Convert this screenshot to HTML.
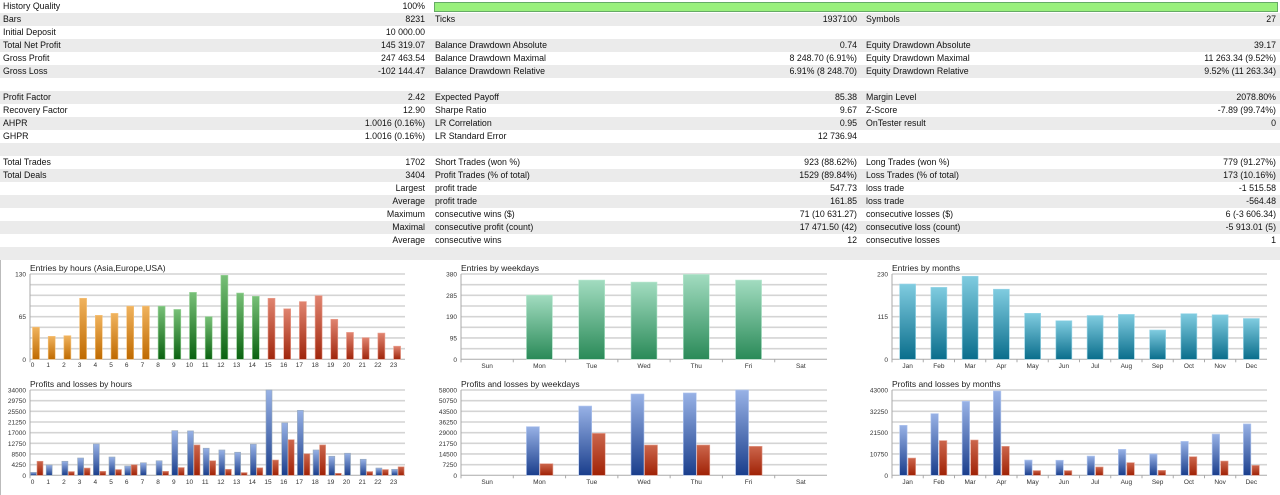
<!DOCTYPE html>
<html><head><meta charset="utf-8"><style>
html,body{margin:0;padding:0;background:#fff;width:1280px;height:495px;overflow:hidden;font-family:"Liberation Sans",sans-serif;}
#tbl{position:absolute;left:0;top:0;width:1280px;}
.r{position:relative;height:13px;font-size:8.8px;line-height:13px;color:#111;}
.r:nth-child(even){background:#ebebeb;}
.r span{position:absolute;white-space:nowrap;}
.a{left:3px}.b{right:855px}.c{left:435px}.d{right:423px}.e{left:866px}.f{right:4px}
#bar{position:absolute;left:434px;top:2px;width:842px;height:8px;background:#99f07c;border:1px solid #6a6;}
svg{position:absolute;left:0;top:260px}
</style></head><body>
<div id="tbl">
<div class="r"><span class="a">History Quality</span><span class="b">100%</span></div>
<div class="r"><span class="a">Bars</span><span class="b">8231</span><span class="c">Ticks</span><span class="d">1937100</span><span class="e">Symbols</span><span class="f">27</span></div>
<div class="r"><span class="a">Initial Deposit</span><span class="b">10 000.00</span></div>
<div class="r"><span class="a">Total Net Profit</span><span class="b">145 319.07</span><span class="c">Balance Drawdown Absolute</span><span class="d">0.74</span><span class="e">Equity Drawdown Absolute</span><span class="f">39.17</span></div>
<div class="r"><span class="a">Gross Profit</span><span class="b">247 463.54</span><span class="c">Balance Drawdown Maximal</span><span class="d">8 248.70 (6.91%)</span><span class="e">Equity Drawdown Maximal</span><span class="f">11 263.34 (9.52%)</span></div>
<div class="r"><span class="a">Gross Loss</span><span class="b">-102 144.47</span><span class="c">Balance Drawdown Relative</span><span class="d">6.91% (8 248.70)</span><span class="e">Equity Drawdown Relative</span><span class="f">9.52% (11 263.34)</span></div>
<div class="r"></div>
<div class="r"><span class="a">Profit Factor</span><span class="b">2.42</span><span class="c">Expected Payoff</span><span class="d">85.38</span><span class="e">Margin Level</span><span class="f">2078.80%</span></div>
<div class="r"><span class="a">Recovery Factor</span><span class="b">12.90</span><span class="c">Sharpe Ratio</span><span class="d">9.67</span><span class="e">Z-Score</span><span class="f">-7.89 (99.74%)</span></div>
<div class="r"><span class="a">AHPR</span><span class="b">1.0016 (0.16%)</span><span class="c">LR Correlation</span><span class="d">0.95</span><span class="e">OnTester result</span><span class="f">0</span></div>
<div class="r"><span class="a">GHPR</span><span class="b">1.0016 (0.16%)</span><span class="c">LR Standard Error</span><span class="d">12 736.94</span></div>
<div class="r"></div>
<div class="r"><span class="a">Total Trades</span><span class="b">1702</span><span class="c">Short Trades (won %)</span><span class="d">923 (88.62%)</span><span class="e">Long Trades (won %)</span><span class="f">779 (91.27%)</span></div>
<div class="r"><span class="a">Total Deals</span><span class="b">3404</span><span class="c">Profit Trades (% of total)</span><span class="d">1529 (89.84%)</span><span class="e">Loss Trades (% of total)</span><span class="f">173 (10.16%)</span></div>
<div class="r"><span class="b">Largest</span><span class="c">profit trade</span><span class="d">547.73</span><span class="e">loss trade</span><span class="f">-1 515.58</span></div>
<div class="r"><span class="b">Average</span><span class="c">profit trade</span><span class="d">161.85</span><span class="e">loss trade</span><span class="f">-564.48</span></div>
<div class="r"><span class="b">Maximum</span><span class="c">consecutive wins ($)</span><span class="d">71 (10 631.27)</span><span class="e">consecutive losses ($)</span><span class="f">6 (-3 606.34)</span></div>
<div class="r"><span class="b">Maximal</span><span class="c">consecutive profit (count)</span><span class="d">17 471.50 (42)</span><span class="e">consecutive loss (count)</span><span class="f">-5 913.01 (5)</span></div>
<div class="r"><span class="b">Average</span><span class="c">consecutive wins</span><span class="d">12</span><span class="e">consecutive losses</span><span class="f">1</span></div>
<div class="r"></div>
</div>
<div id="bar"></div>
<svg id="ch" width="1280" height="235" viewBox="0 260 1280 235" font-family="Liberation Sans, sans-serif">
<defs>
<linearGradient id="go" x1="0" y1="0" x2="0" y2="1"><stop offset="0" stop-color="#f0b35e"/><stop offset="1" stop-color="#bf6a00"/></linearGradient>
<linearGradient id="gg" x1="0" y1="0" x2="0" y2="1"><stop offset="0" stop-color="#78c078"/><stop offset="1" stop-color="#0a6210"/></linearGradient>
<linearGradient id="gr" x1="0" y1="0" x2="0" y2="1"><stop offset="0" stop-color="#e08470"/><stop offset="1" stop-color="#a0260c"/></linearGradient>
<linearGradient id="gb" x1="0" y1="0" x2="0" y2="1"><stop offset="0" stop-color="#98b2e6"/><stop offset="1" stop-color="#1a3e8c"/></linearGradient>
<linearGradient id="gd" x1="0" y1="0" x2="0" y2="1"><stop offset="0" stop-color="#cc664c"/><stop offset="1" stop-color="#a02206"/></linearGradient>
<linearGradient id="gw" x1="0" y1="0" x2="0" y2="1"><stop offset="0" stop-color="#a2dcc0"/><stop offset="1" stop-color="#2a8a58"/></linearGradient>
<linearGradient id="gt" x1="0" y1="0" x2="0" y2="1"><stop offset="0" stop-color="#80cce0"/><stop offset="1" stop-color="#0a6e8c"/></linearGradient>
</defs>
<line x1="0.5" y1="260" x2="0.5" y2="495" stroke="#bbb"/>
<g id="g"></g>
</svg>
<script>
var S='http://www.w3.org/2000/svg',G=document.getElementById('g');
function el(t,a,tx){var e=document.createElementNS(S,t);for(var k in a)e.setAttribute(k,a[k]);if(tx!=null)e.textContent=tx;G.appendChild(e);return e;}
function axes(x0,x1,top,zero,title,labels,every){
  el('text',{x:x0,y:top-3,'font-size':'8.5',fill:'#222'},title);
  for(var i=0;i<=8;i++){var y=top+(zero-top)*i/8;el('line',{x1:x0,x2:x1,y1:y,y2:y,stroke:i==8?'#aaa':'#d4d4d4','stroke-width':i==8?1:1.6});}
  el('line',{x1:x0,x2:x0,y1:top,y2:zero+3,stroke:'#aaa'});
  for(var j=0;j<labels.length;j++){var y=top+(zero-top)*j*every/8;el('text',{x:x0-4,y:y+2.5,'font-size':'6.5','text-anchor':'end',fill:'#333'},labels[j]);}
}
function xl(xs,y,names){for(var i=0;i<names.length;i++)el('text',{x:xs[i],y:y,'font-size':'6.5','text-anchor':'middle',fill:'#333'},names[i]);}
function bar(x,w,v,max,top,zero,f,st){var h=(zero-top)*v/max;if(h<=0)return;el('rect',{x:x,y:zero-h,width:w,height:h,fill:'url(#'+f+')',stroke:st,'stroke-width':0.6});}
var t1=274,z1=359.3,t2=390,z2=475.3;
axes(30,405,t1,z1,'Entries by hours (Asia,Europe,USA)',['130','65','0'],4);
axes(30,405,t2,z2,'Profits and losses by hours',['34000','29750','25500','21250','17000','12750','8500','4250','0'],1);
var eh=[49,35,36,93,67,70,81,81,81,76,102,65,128,101,96,93,77,88,97,61,41,33,40,20];
var pb=[1200,4100,5600,6900,12500,7300,3700,5000,5800,17800,17700,10800,10100,9200,12400,34000,20900,25900,10100,7600,8800,6400,2900,2400];
var pr=[5600,0,1500,2900,1600,2300,4200,0,1600,3100,12100,5800,2400,1100,3000,6100,14200,8600,12100,800,0,1500,2300,3400];
var hx=[],hn=[];
for(var i=0;i<24;i++){var x=32.5+i*15.7;hx.push(x);hn.push(''+i);
 var f=i<8?'go':(i<15?'gg':'gr');bar(x,7,eh[i],130,t1,z1,f,i<8?'#f6c27a':(i<15?'#9ad49a':'#eca090'));
 bar(x-2,6,pb[i],34000,t2,z2,'gb','#9ab');bar(x+4.5,6,pr[i],34000,t2,z2,'gd','#e09a88');}
xl(hx,367,hn);xl(hx,484,hn);
var wx0=461,wx1=827,cw=(wx1-wx0)/7;
axes(wx0,wx1,t1,z1,'Entries by weekdays',['380','285','190','95','0'],2);
axes(wx0,wx1,t2,z2,'Profits and losses by weekdays',['58000','50750','43500','36250','29000','21750','14500','7250','0'],1);
var wn=['Sun','Mon','Tue','Wed','Thu','Fri','Sat'],we=[0,286,353,344,378,353,0],wb=[0,33100,47100,55300,56000,58000,0],wr=[0,7900,28500,20600,20600,19700,0],wxs=[];
for(var i=0;i<7;i++){var c=wx0+cw*(i+0.5);wxs.push(c);
 el('line',{x1:wx0+cw*i,x2:wx0+cw*i,y1:z1,y2:z1+3,stroke:'#aaa'});el('line',{x1:wx0+cw*i,x2:wx0+cw*i,y1:z2,y2:z2+3,stroke:'#aaa'});
 bar(c-13,26,we[i],380,t1,z1,'gw','#b8e8cf');bar(c-13,13,wb[i],58000,t2,z2,'gb','#b4c8f0');bar(c+0.5,13,wr[i],58000,t2,z2,'gd','#e4a090');}
xl(wxs,368,wn);xl(wxs,484,wn);
var mx0=892,mx1=1267,mw=(mx1-mx0)/12;
axes(mx0,mx1,t1,z1,'Entries by months',['230','115','0'],4);
axes(mx0,mx1,t2,z2,'Profits and losses by months',['43000','32250','21500','10750','0'],2);
var mn=['Jan','Feb','Mar','Apr','May','Jun','Jul','Aug','Sep','Oct','Nov','Dec'];
var me=[203,194,224,189,124,104,118,121,79,123,120,110];
var mb=[25200,31100,37300,42500,7700,7600,9700,13100,10800,17100,20800,25900];
var mr=[8700,17500,17800,14600,2400,2400,4200,6400,2500,9400,7200,5000],mxs=[];
for(var i=0;i<12;i++){var c=mx0+mw*(i+0.5);mxs.push(c);
 el('line',{x1:mx0+mw*i,x2:mx0+mw*i,y1:z1,y2:z1+3,stroke:'#aaa'});el('line',{x1:mx0+mw*i,x2:mx0+mw*i,y1:z2,y2:z2+3,stroke:'#aaa'});
 bar(c-8,16,me[i],230,t1,z1,'gt','#9ad6e8');bar(c-8,7.5,mb[i],43000,t2,z2,'gb','#b4c8f0');bar(c+0.5,7.5,mr[i],43000,t2,z2,'gd','#e4a090');}
xl(mxs,368,mn);xl(mxs,484,mn);
</script>
</body></html>
